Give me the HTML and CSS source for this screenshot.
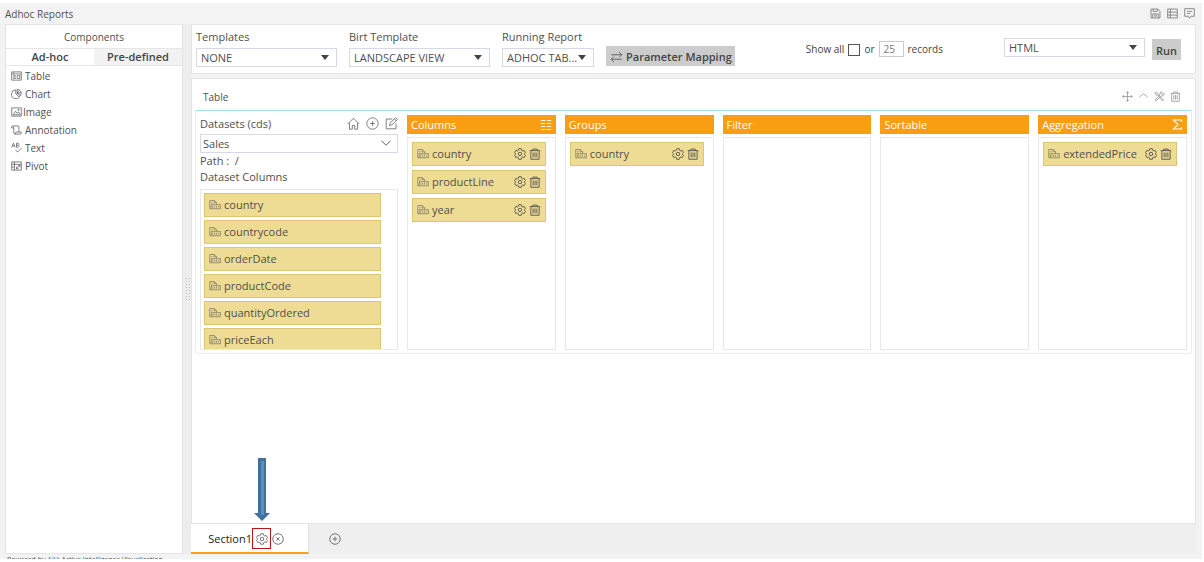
FILE: index.html
```html
<!DOCTYPE html>
<html lang="en">
<head>
<meta charset="utf-8">
<title>Adhoc Reports</title>
<link rel="stylesheet" href="styles.css">
</head>
<body>
<svg class="sprite" aria-hidden="true">
  <symbol id="gear" viewBox="0 0 16 16"><path d="M6.3 1h3.4l.5 2 1.5.9 2-.6 1.6 2.900-1.400 1.500v.600l1.400 1.500-1.600 2.900-2-.6-1.500.9-.5 2H6.300l-.5-2-1.500-.9-2 .6L.7 9.800l1.400-1.500v-.600L.7 6.200l1.600-2.900 2 .6L5.800 3z"/><circle cx="8" cy="8" r="2.300"/></symbol>
  <symbol id="trash" viewBox="0 0 16 16"><path d="M1 3.500h14M5 3.500v-2h6v2M2.500 3.500V15h11V3.500M5.500 6v6.500M8 6v6.500M10.500 6v6.500"/></symbol>
  <symbol id="field" viewBox="0 0 16 14"><path d="M3 12H1V1h6l3 3v2M7 1v3h3M3 6.500h12.500V12H3zM5 8v2.500M7.500 8v2.500M10 8v2.500M13 8v2.500M3 4h2"/></symbol>
  <symbol id="home" viewBox="0 0 16 16"><path d="M1 8.500 8 1.500l7 7M3 7v8h3.500v-4.500h3V15H13V7"/></symbol>
  <symbol id="plus" viewBox="0 0 16 16"><circle cx="8" cy="8" r="7"/><path d="M8 5v6M5 8h6"/></symbol>
  <symbol id="close" viewBox="0 0 16 16"><circle cx="8" cy="8" r="7"/><path d="m5.800 5.800 4.400 4.400M10.200 5.800l-4.400 4.400"/></symbol>
  <symbol id="edit" viewBox="0 0 16 16"><path d="M9 2.500H1.500v12h12V8M5.500 10.500l.8-3L13 .8l2.300 2.300-6.800 6.600zM11.500 2.300l2.300 2.300"/></symbol>
  <symbol id="down" viewBox="0 0 16 16"><path d="m2 5 6 6 6-6"/></symbol>
  <symbol id="up" viewBox="0 0 16 16"><path d="m2 9 6-5 6 5"/></symbol>
  <symbol id="move" viewBox="0 0 16 16"><path d="M8 1v14M1 8h14M6 3l2-2 2 2M6 13l2 2 2-2M3 6 1 8l2 2M13 6l2 2-2 2"/></symbol>
  <symbol id="tools" viewBox="0 0 16 16"><path d="m1.500 2.500 1-1 3 2v1.500l8.500 8-1.500 1.500L5 6H3.500zM10 7.500l-7 7-1.500-1.500 7-7V3l3-2 .5.500L10.500 3.500l1.500 1.500 2.500-1.500.5 1-2 2.500z"/></symbol>
  <symbol id="save" viewBox="0 0 16 16"><path d="M1.500 1.500h10l3 3v10h-13zM4.500 1.500v3.500h6V1.500M4 14.500v-6h8v6"/><circle cx="8" cy="11.300" r="1.300"/></symbol>
  <symbol id="grid" viewBox="0 0 16 16"><path d="M1 1.500h14v13H1zM5 1.500v13M1 6h14M1 10.300h14"/></symbol>
  <symbol id="comment" viewBox="0 0 16 16"><path d="M1 1h14v11h-5l-2 3-2-3H1zM4.500 5h7M4.500 8H9"/></symbol>
  <symbol id="swap" viewBox="0 0 16 16"><path d="M1 5h14l-3.500-3.500M15 5l-3.500 3.500M15 11H1l3.500-3.500M1 11l3.500 3.500"/></symbol>
  <symbol id="table" viewBox="0 0 16 14"><path d="M1 1h14v12H1zM1 4h14M3 6.500h4M3 8.500h4M3 10.500h4M9 6.500h4v4H9zM3 2.500h2"/></symbol>
  <symbol id="chart" viewBox="0 0 16 16"><path d="M7 2a6.300 6.300 0 1 0 6 8M7 2v6l5 4M9 1v6l5 3a6 6 0 0 0-5-9M9 7l3.500-4.500M9 7l6-1"/></symbol>
  <symbol id="image" viewBox="0 0 16 14"><path d="M1 1h14v12H1zM3 11l3.500-5 2.500 3 2-2 2.500 4z"/><circle cx="11" cy="4" r="1"/></symbol>
  <symbol id="note" viewBox="0 0 16 14"><path d="M4 4H1V2.500Q1 1 2.500 1H10q1.500 0 1.500 1.500V10M4 2v9q0 2 2 2h7.500q1.500 0 1.500-3H7q0 3-1.500 3"/></symbol>
  <symbol id="letters" viewBox="0 0 16 16"><path d="m1 7 2.500-6L6 7M2 5h3M8 1v6h2.500q3-1.500 0-3 2-1.500 0-3H8M8 4h2.500M6.500 11l3 3 6-6"/></symbol>
  <symbol id="pivot" viewBox="0 0 16 14"><path d="M1 1h14v12H1zM1 4.500h14M5 1v12M1 8.500h4M8 11l5-5M10 6h3v3M8 8v3h3"/></symbol>
  <symbol id="lines" viewBox="0 0 16 16"><path d="M1 2h6M9 2h6M1 6h6M9 6h6M1 10h6M9 10h6M1 14h6M9 14h6"/></symbol>
  <symbol id="sigma" viewBox="0 0 16 16"><path d="M14 4V1.500H2L9 8l-7 6.500h12V12"/></symbol>
</svg>

<div class="app">
  <header class="topbar">
    <h1>Adhoc Reports</h1>
    <div class="top-actions">
      <button aria-label="Save"><svg class="icon"><use href="#save"/></svg></button>
      <button aria-label="Grid"><svg class="icon"><use href="#grid"/></svg></button>
      <button aria-label="Comment"><svg class="icon"><use href="#comment"/></svg></button>
    </div>
  </header>

  <div class="workspace">
    <aside class="sidebar">
      <h2>Components</h2>
      <div class="side-tabs">
        <button class="active">Ad-hoc</button>
        <button>Pre-defined</button>
      </div>
      <ul class="components">
        <li><svg class="icon"><use href="#table"/></svg>Table</li>
        <li><svg class="icon"><use href="#chart"/></svg>Chart</li>
        <li class="tight"><svg class="icon"><use href="#image"/></svg>Image</li>
        <li><svg class="icon"><use href="#note"/></svg>Annotation</li>
        <li><svg class="icon"><use href="#letters"/></svg>Text</li>
        <li><svg class="icon"><use href="#pivot"/></svg>Pivot</li>
      </ul>
    </aside>

    <div class="splitter"><span class="grip"></span></div>

    <main class="main">
      <section class="toolbar">
        <div class="field">
          <label for="templates">Templates</label>
          <span class="select"><select id="templates"><option>NONE</option></select></span>
        </div>
        <div class="field">
          <label for="birt">Birt Template</label>
          <span class="select"><select id="birt"><option>LANDSCAPE VIEW</option></select></span>
        </div>
        <div class="field short">
          <label for="running">Running Report</label>
          <span class="select"><select id="running"><option>ADHOC TAB...</option></select></span>
        </div>
        <button class="btn mapping"><svg class="icon"><use href="#swap"/></svg>Parameter Mapping</button>
        <div class="records">
          <label for="all">Show all</label>
          <input type="checkbox" id="all">
          <label for="count">or</label>
          <input type="text" id="count" value="25">
          <span>records</span>
        </div>
        <span class="select output"><select aria-label="Output format"><option>HTML</option></select></span>
        <button class="btn run">Run</button>
      </section>

      <section class="canvas">
        <div class="report">
          <header class="report-head">
            <h2>Table</h2>
            <div class="report-actions">
              <button aria-label="Move"><svg class="icon"><use href="#move"/></svg></button>
              <button aria-label="Collapse"><svg class="icon"><use href="#up"/></svg></button>
              <button aria-label="Settings"><svg class="icon"><use href="#tools"/></svg></button>
              <button aria-label="Delete"><svg class="icon"><use href="#trash"/></svg></button>
            </div>
          </header>
          <div class="report-body">
            <div class="datasets">
              <div class="datasets-head">
                <label for="dataset">Datasets (cds)</label>
                <div class="dataset-actions">
                  <button aria-label="Home"><svg class="icon"><use href="#home"/></svg></button>
                  <button aria-label="Add"><svg class="icon"><use href="#plus"/></svg></button>
                  <button aria-label="Edit"><svg class="icon"><use href="#edit"/></svg></button>
                </div>
              </div>
              <span class="dataset-select"><select id="dataset"><option>Sales</option></select><svg class="icon"><use href="#down"/></svg></span>
              <p>Path :&nbsp; /</p>
              <p>Dataset Columns</p>
              <ul class="box source">
                <li class="item"><svg class="icon type"><use href="#field"/></svg><span>country</span></li>
                <li class="item"><svg class="icon type"><use href="#field"/></svg><span>countrycode</span></li>
                <li class="item"><svg class="icon type"><use href="#field"/></svg><span>orderDate</span></li>
                <li class="item"><svg class="icon type"><use href="#field"/></svg><span>productCode</span></li>
                <li class="item"><svg class="icon type"><use href="#field"/></svg><span>quantityOrdered</span></li>
                <li class="item"><svg class="icon type"><use href="#field"/></svg><span>priceEach</span></li>
              </ul>
            </div>
            <div class="shelf">
              <h3>Columns<svg class="icon"><use href="#lines"/></svg></h3>
              <ul class="box">
                <li class="item"><svg class="icon type"><use href="#field"/></svg><span>country</span><button aria-label="Settings"><svg class="icon"><use href="#gear"/></svg></button><button aria-label="Delete"><svg class="icon"><use href="#trash"/></svg></button></li>
                <li class="item"><svg class="icon type"><use href="#field"/></svg><span>productLine</span><button aria-label="Settings"><svg class="icon"><use href="#gear"/></svg></button><button aria-label="Delete"><svg class="icon"><use href="#trash"/></svg></button></li>
                <li class="item"><svg class="icon type"><use href="#field"/></svg><span>year</span><button aria-label="Settings"><svg class="icon"><use href="#gear"/></svg></button><button aria-label="Delete"><svg class="icon"><use href="#trash"/></svg></button></li>
              </ul>
            </div>
            <div class="shelf">
              <h3>Groups</h3>
              <ul class="box">
                <li class="item"><svg class="icon type"><use href="#field"/></svg><span>country</span><button aria-label="Settings"><svg class="icon"><use href="#gear"/></svg></button><button aria-label="Delete"><svg class="icon"><use href="#trash"/></svg></button></li>
              </ul>
            </div>
            <div class="shelf">
              <h3>Filter</h3>
              <ul class="box"></ul>
            </div>
            <div class="shelf">
              <h3>Sortable</h3>
              <ul class="box"></ul>
            </div>
            <div class="shelf">
              <h3>Aggregation<svg class="icon sum"><use href="#sigma"/></svg></h3>
              <ul class="box">
                <li class="item"><svg class="icon type"><use href="#field"/></svg><span>extendedPrice</span><button aria-label="Settings"><svg class="icon"><use href="#gear"/></svg></button><button aria-label="Delete"><svg class="icon"><use href="#trash"/></svg></button></li>
              </ul>
            </div>
          </div>
        </div>
      </section>

      <nav class="sections">
        <div class="section-tab">
          <span>Section1</span>
          <button class="marked" aria-label="Section settings"><svg class="icon"><use href="#gear"/></svg>
            <svg class="pointer" viewBox="0 0 16 64" aria-hidden="true"><path class="edge" d="M4 0h8v55h4l-8 8-8-8h4z"/><path class="core" d="M7 3h3v54H7z"/></svg>
          </button>
          <button aria-label="Close section"><svg class="icon"><use href="#close"/></svg></button>
        </div>
        <button class="add" aria-label="Add section"><svg class="icon"><use href="#plus"/></svg></button>
      </nav>
    </main>
  </div>
  <footer class="footer">Powered by <a href="#">AIV</a>: Active Intelligence Visualization</footer>
</div>
</body>
</html>
```

FILE: styles.css
```css
* { box-sizing: border-box; }

body {
  margin: 0;
  padding: 3px 2px 3px 0;
  height: 100vh;
  background: #fff;
  color: #505050;
  font: 11px/16px "Open Sans", "Noto Sans", sans-serif;
}

h1, h2, h3, p, ul { margin: 0; padding: 0; font-size: inherit; font-weight: 400; }
ul { list-style: none; }
button, input, select { font: inherit; color: inherit; margin: 0; }
button { padding: 0; border: 0; background: none; display: flex; align-items: center; }

.sprite { display: none; }
.icon {
  display: block;
  flex: none;
  width: 12px;
  height: 12px;
  fill: none;
  stroke: currentColor;
  stroke-width: 1.2;
}

.app { height: 100%; display: flex; flex-direction: column; background: #f3f3f3; }

.topbar { height: 21px; flex: none; display: flex; align-items: center; justify-content: space-between; padding: 0 7px 0 5px; }
.topbar h1 { font-size: 10px; }
.top-actions { display: flex; gap: 6px; color: #777; }
.top-actions .icon { width: 11px; height: 11px; }

.workspace { flex: 1; min-height: 0; display: flex; padding: 0 6px 0 5px; }

.sidebar { width: 178px; flex: none; background: #fff; border: 1px solid #e4e4e4; }
.sidebar h2 { height: 24px; line-height: 24px; text-align: center; font-size: 10px; border-bottom: 1px solid #e6e6e6; }
.side-tabs { display: grid; grid-template-columns: 1fr 1fr; border-bottom: 1px solid #e6e6e6; }
.side-tabs button { height: 16px; justify-content: center; background: #f2f2f2; font-weight: 600; color: #444; }
.side-tabs .active { background: #fff; }
.components { padding: 1px 5px; font-size: 10px; }
.components li { display: flex; align-items: center; gap: 3px; height: 18px; }
.components .tight { gap: 1px; }
.components .icon { width: 11px; height: 12px; stroke-width: 1; }

.splitter { width: 8px; flex: none; display: flex; align-items: center; justify-content: center; background: #ededed; }
.grip { width: 5px; height: 24px; background: radial-gradient(circle, #bbb 1px, transparent 1px) 0 0 / 3px 3px; }

.main { flex: 1; min-width: 0; display: flex; flex-direction: column; }
.toolbar {
  height: 50px;
  flex: none;
  display: flex;
  align-items: flex-start;
  gap: 12px;
  padding: 4px 14px 0 4px;
  background: #fff;
  border: 1px solid #e4e4e4;
  margin-bottom: 4px;
}
.field { width: 141px; }
.field.short { width: 92px; }
.field label { display: block; margin-bottom: 3px; }
.select { display: block; position: relative; }
.select select {
  display: block;
  width: 100%;
  height: 19px;
  padding: 0 4px;
  border: 1px solid #d5dae6;
  border-radius: 0;
  background: #fff;
  appearance: none;
}
.select::after {
  content: "";
  position: absolute;
  right: 8px;
  top: 7px;
  border: 4px solid transparent;
  border-top: 5px solid #444;
  border-bottom: 0;
  pointer-events: none;
}
.btn { height: 20px; padding: 0 4px; background: #ccc; font-weight: 600; color: #444; margin-top: 17px; }
.mapping { gap: 3px; padding: 2px 3px 0 4px; }
.mapping .icon { width: 13px; stroke-width: 1; }
.records { display: flex; align-items: center; gap: 4px; margin: 12px 0 0 auto; font-size: 10px; color: #444; }
.records input[type="checkbox"] { appearance: none; width: 12px; height: 12px; border: 1px solid #555; margin-top: 2px; }
.records input[type="text"] { width: 25px; height: 16px; padding: 0 4px; border: 1px solid #ccc; color: #777; }
.output { width: 141px; margin: 9px 0 0 49px; }
.run { height: 21px; margin: 10px 0 0 -5px; padding: 3px 4px 0; }

.canvas { flex: 1; min-height: 0; padding: 0 3px; background: #fff; border: 1px solid #e4e4e4; }
.report-head { height: 31px; display: flex; align-items: center; justify-content: space-between; padding: 4px 11px 0 8px; font-size: 10px; }
.report-actions { display: flex; align-items: center; gap: 5px; color: #999; }
.report-actions .icon { width: 11px; height: 11px; }
.report-body {
  display: grid;
  grid-template-columns: 198px repeat(5, 1fr);
  gap: 9px;
  height: 244px;
  padding: 4px 4px 3px;
  border: 1px solid #ececec;
  border-top-color: #9ee4ef;
  border-radius: 0 0 4px 4px;
}
.datasets, .shelf { display: flex; flex-direction: column; min-width: 0; min-height: 0; }
.datasets-head { height: 19px; display: flex; align-items: center; justify-content: space-between; padding-bottom: 2px; }
.dataset-actions { display: flex; gap: 6px; color: #666; }
.dataset-actions .icon { width: 13px; height: 13px; stroke-width: 1; }
.dataset-select { display: block; position: relative; }
.dataset-select select { display: block; width: 100%; height: 19px; padding: 1px 2px 0; border: 1px solid #d5dae6; background: #fff; appearance: none; }
.dataset-select .icon { position: absolute; right: 6px; top: 3px; pointer-events: none; }
.box { flex: 1; min-height: 0; display: flex; flex-direction: column; gap: 4px; padding: 4px 9px 4px 4px; border: 1px solid #e8e8e8; overflow: hidden; }
.source { margin-top: 4px; padding: 3px 16px 0 3px; gap: 3px; }
.item { flex: none; height: 24px; display: flex; align-items: center; gap: 3px; padding: 0 4px; background: #eedc94; border: 1px solid #dcc673; }
.item span { flex: 1; min-width: 0; }
.item .type { opacity: .6; }
.shelf h3 { height: 19px; flex: none; display: flex; align-items: center; justify-content: space-between; padding: 0 4px; margin-bottom: 3px; background: #f99d12; color: #fff; }
.shelf h3 .sum { width: 11px; height: 11px; stroke-width: 1.5; }

.sections { height: 30px; flex: none; display: flex; background: #efefef; }
.section-tab { width: 118px; display: flex; align-items: center; justify-content: flex-end; padding: 1px 24px 0 0; background: #fff; border-bottom: 2px solid #f9a11b; border-right: 1px solid #e4e4e4; color: #222; }
.section-tab button { color: #666; }
.section-tab .marked { position: relative; width: 19px; height: 21px; margin-right: 1px; justify-content: center; border: 1px solid #b8141c; }
.pointer { position: absolute; left: 1px; bottom: 26px; width: 16px; height: 64px; }
.edge { fill: #41719c; }
.core { fill: #5590c8; }
.add { margin-left: 20px; color: #666; }

.footer { height: 5px; flex: none; padding: 1px 7px 0; overflow: hidden; font-size: 7px; line-height: 9px; }
.footer a { color: #2a7fb8; text-decoration: none; }
```
